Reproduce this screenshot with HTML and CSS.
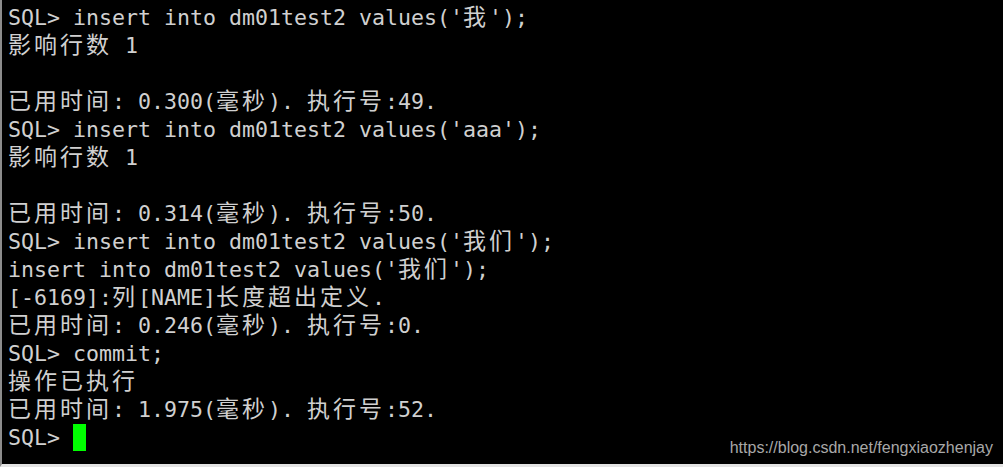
FILE: index.html
```html
<!DOCTYPE html>
<html lang="zh">
<head>
<meta charset="utf-8">
<link rel="stylesheet" href="styles.css">
</head>
<body>
<div class="term">
  <div class="line">SQL&gt; insert into dm01test2 values('<span class="c">我</span>');</div>
  <div class="line"><span class="c">影响行数</span> 1</div>
  <div class="line"></div>
  <div class="line"><span class="c">已用时间</span>: 0.300(<span class="c">毫秒</span>). <span class="c">执行号</span>:49.</div>
  <div class="line">SQL&gt; insert into dm01test2 values('aaa');</div>
  <div class="line"><span class="c">影响行数</span> 1</div>
  <div class="line"></div>
  <div class="line"><span class="c">已用时间</span>: 0.314(<span class="c">毫秒</span>). <span class="c">执行号</span>:50.</div>
  <div class="line">SQL&gt; insert into dm01test2 values('<span class="c">我们</span>');</div>
  <div class="line">insert into dm01test2 values('<span class="c">我们</span>');</div>
  <div class="line">[-6169]:<span class="c">列</span>[NAME]<span class="c">长度超出定义</span>.</div>
  <div class="line"><span class="c">已用时间</span>: 0.246(<span class="c">毫秒</span>). <span class="c">执行号</span>:0.</div>
  <div class="line">SQL&gt; commit;</div>
  <div class="line"><span class="c">操作已执行</span></div>
  <div class="line"><span class="c">已用时间</span>: 1.975(<span class="c">毫秒</span>). <span class="c">执行号</span>:52.</div>
  <div class="line prompt">SQL&gt; <span class="cursor"></span></div>
  <div class="watermark">https://blog.csdn.net/fengxiaozhenjay</div>
</div>
</body>
</html>
```
FILE: styles.css
```css
html, body {
  margin: 0;
  padding: 0;
  background: #000;
}
.term {
  position: relative;
  box-sizing: border-box;
  width: 1003px;
  height: 467px;
  background: #000;
  border-left: 2px solid #8c8c8c;
  border-bottom: 3px solid #e4e4e4;
  padding: 4px 0 0 6px;
  overflow: hidden;
  color: #d0d0d0;
  font-family: "DejaVu Sans Mono", monospace;
  font-size: 21.6px;
}
.line {
  height: 28px;
  line-height: 28px;
  white-space: pre;
  overflow: visible;
}
.c {
  font-family: "Noto Sans CJK SC", sans-serif;
  font-size: 23px;
  letter-spacing: 3px;
  line-height: 1;
}
.prompt {
  display: flex;
  align-items: flex-start;
}
.cursor {
  display: inline-block;
  width: 13px;
  height: 27px;
  background: #00ff00;
}
.watermark {
  position: absolute;
  right: 10px;
  bottom: 7px;
  font-family: "Liberation Sans", Arial, sans-serif;
  font-size: 16px;
  color: #a8a8a8;
  line-height: 18px;
}
```
